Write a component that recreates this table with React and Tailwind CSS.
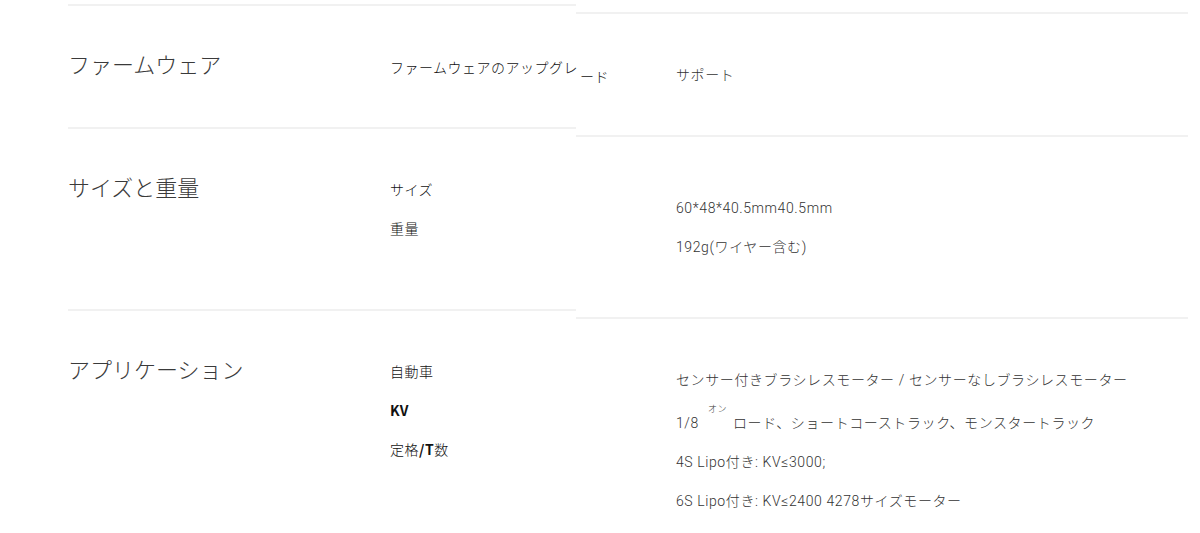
import React from "react";

const jp = { fontFamily: '"Noto Sans CJK JP", "Noto Sans", sans-serif' };
const rt = { fontFamily: 'Roboto, "Noto Sans CJK JP", sans-serif' };

function LeftRow({ title, labels, h, lpt }) {
  return (
    <div className={`flex border-t-2 border-[#f1f1f1] ${h}`}>
      <div className="w-[322px] shrink-0 pt-[41px]">
        <div className="text-[22px] leading-[32px] font-light text-[#3a3a3a]">{title}</div>
      </div>
      <div className={`flex flex-col gap-[19px] ${lpt}`}>
        {labels.map((l, i) => (
          <div key={i} className="text-[14px] leading-[20px] font-light text-[#111] tracking-[0.5px] whitespace-nowrap">
            {l}
          </div>
        ))}
      </div>
    </div>
  );
}

function RightRow({ values, h, pt, lead }) {
  return (
    <div className={`relative border-t-2 border-[#f1f1f1] ${h}`}>
      {lead}
      <div className={`flex flex-col gap-[19px] pl-[100px] ${pt}`}>
        {values.map((v, i) => (
          <div
            key={i}
            className="text-[14px] leading-[20px] font-light text-[#333] tracking-[0.6px] whitespace-nowrap"
            style={rt}
          >
            {v}
          </div>
        ))}
      </div>
    </div>
  );
}

export default function App() {
  return (
    <div className="w-[1200px] h-[533px] overflow-hidden bg-white flex" style={jp}>
      <div className="w-[576px] shrink-0 pl-[68px] pt-[4px]">
        <LeftRow title="ファームウェア" h="h-[123px]" lpt="pt-[51px]" labels={["ファームウェアのアップグレ"]} />
        <LeftRow title="サイズと重量" h="h-[182px]" lpt="pt-[50px]" labels={["サイズ", "重量"]} />
        <LeftRow
          title="アプリケーション"
          h="h-[240px]"
          lpt="pt-[50px]"
          labels={[
            "自動車",
            <span className="font-bold">KV</span>,
            <span>
              定格<span className="font-bold">/T</span>数
            </span>,
          ]}
        />
      </div>
      <div className="w-[612px] shrink-0 pt-[12px]">
        <RightRow
          h="h-[123px]"
          pt="pt-[51px]"
          lead={
            <div
              className="absolute left-[4px] top-[52px] text-[14px] leading-[20px] font-light text-[#111] tracking-[0.5px]"
              style={jp}
            >
              ード
            </div>
          }
          values={["サポート"]}
        />
        <RightRow h="h-[182px]" pt="pt-[61px]" values={["60*48*40.5mm40.5mm", "192g(ワイヤー含む)"]} />
        <RightRow
          h="h-[240px]"
          pt="pt-[51px]"
          values={[
            "センサー付きブラシレスモーター / センサーなしブラシレスモーター",
            <span className="mt-[4px] inline-flex items-baseline">
              <span className="w-[30px]">1/8</span>
              <span className="relative inline-block w-[27px]">
                <span className="absolute left-[2px] -top-[24px] text-[9px] leading-[10px]">オン</span>
              </span>
              <span>ロード、ショートコーストラック、モンスタートラック</span>
            </span>,
            "4S Lipo付き: KV≤3000;",
            "6S Lipo付き: KV≤2400 4278サイズモーター",
          ]}
        />
      </div>
    </div>
  );
}
